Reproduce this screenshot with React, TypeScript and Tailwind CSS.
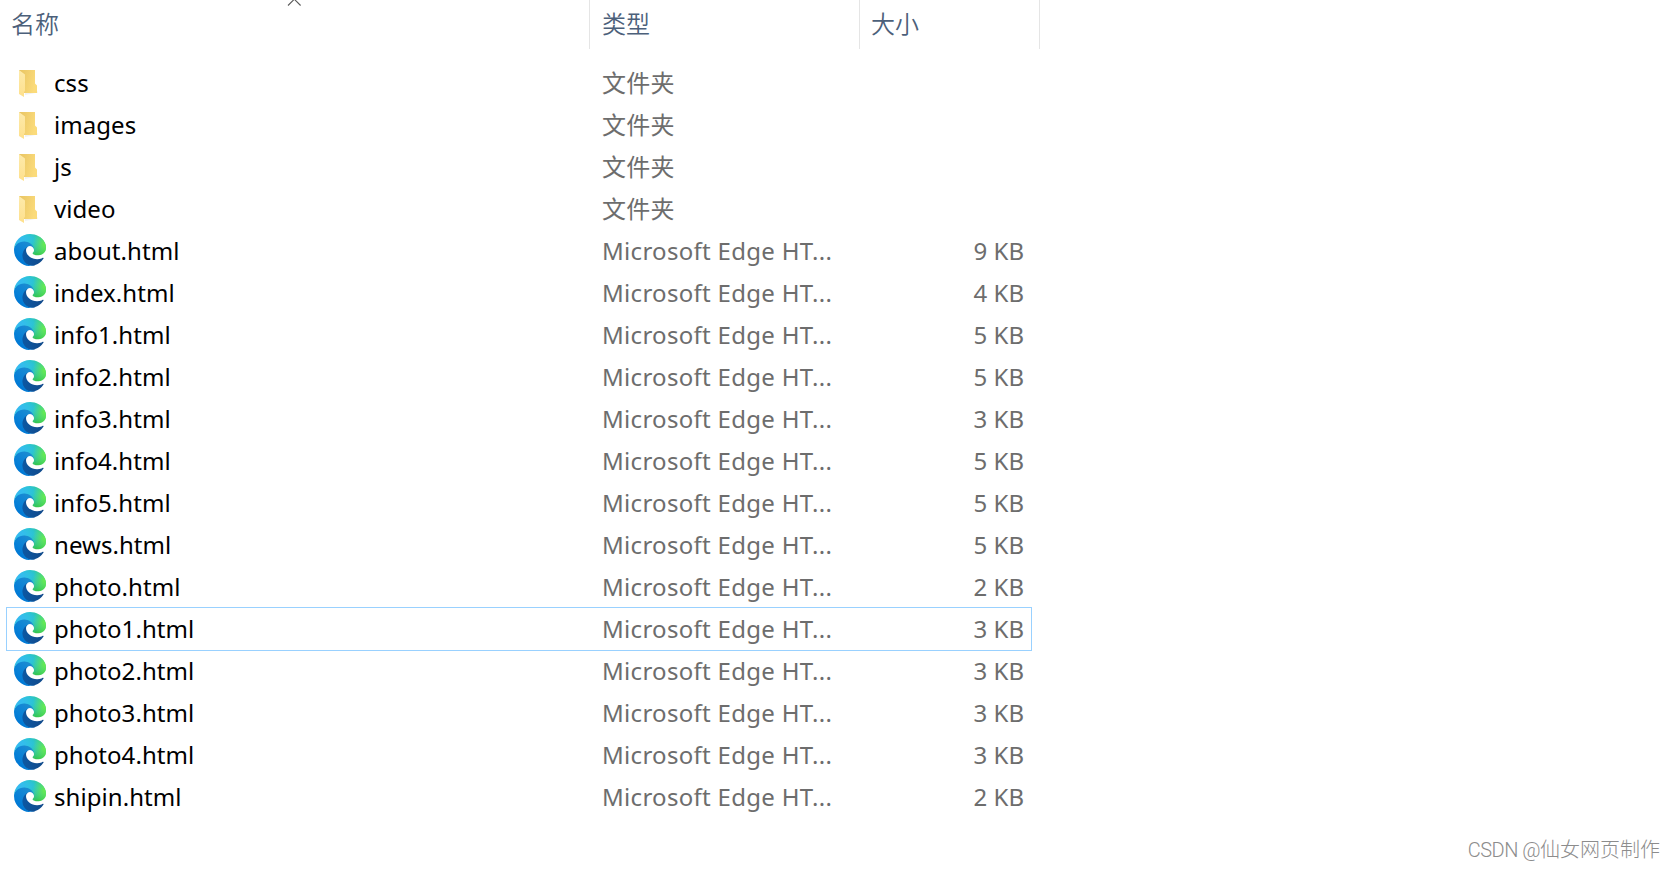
type FileEntry = {
    name: string;
    kind: "folder" | "html";
    size?: string;
    focused?: boolean;
};

const FILES: FileEntry[] = [
    { name: "css", kind: "folder" },
    { name: "images", kind: "folder" },
    { name: "js", kind: "folder" },
    { name: "video", kind: "folder" },
    { name: "about.html", kind: "html", size: "9 KB" },
    { name: "index.html", kind: "html", size: "4 KB" },
    { name: "info1.html", kind: "html", size: "5 KB" },
    { name: "info2.html", kind: "html", size: "5 KB" },
    { name: "info3.html", kind: "html", size: "3 KB" },
    { name: "info4.html", kind: "html", size: "5 KB" },
    { name: "info5.html", kind: "html", size: "5 KB" },
    { name: "news.html", kind: "html", size: "5 KB" },
    { name: "photo.html", kind: "html", size: "2 KB" },
    { name: "photo1.html", kind: "html", size: "3 KB", focused: true },
    { name: "photo2.html", kind: "html", size: "3 KB" },
    { name: "photo3.html", kind: "html", size: "3 KB" },
    { name: "photo4.html", kind: "html", size: "3 KB" },
    { name: "shipin.html", kind: "html", size: "2 KB" },
];

// Gradients shared by all the row icons
function IconDefs() {
    return (
        <svg className="absolute w-0 h-0" aria-hidden="true">
            <defs>
                <linearGradient id="folder-back" x1="0" y1="0" x2="1" y2="0.3">
                    <stop offset="0" stopColor="#e8c462" />
                    <stop offset="1" stopColor="#fbdb7b" />
                </linearGradient>
                <linearGradient id="folder-front" x1="0" y1="0" x2="0" y2="1">
                    <stop offset="0" stopColor="#fdeaab" />
                    <stop offset="1" stopColor="#fee08c" />
                </linearGradient>
                <linearGradient id="edge-dark" gradientUnits="userSpaceOnUse" x1="59" y1="178" x2="236" y2="178">
                    <stop offset="0" stopColor="#0c59a4" />
                    <stop offset="1" stopColor="#114a8b" />
                </linearGradient>
                <linearGradient id="edge-blue" gradientUnits="userSpaceOnUse" x1="138" y1="100" x2="40" y2="220">
                    <stop offset="0" stopColor="#1b8bd0" />
                    <stop offset="0.16" stopColor="#1588d4" />
                    <stop offset="0.67" stopColor="#0680d7" />
                    <stop offset="1" stopColor="#0078d4" />
                </linearGradient>
                <radialGradient
                    id="edge-wave"
                    gradientUnits="userSpaceOnUse"
                    cx="0"
                    cy="0"
                    r="202"
                    gradientTransform="matrix(-0.04 1 -2.13 -0.08 26 45)"
                >
                    <stop offset="0" stopColor="#35b8f1" />
                    <stop offset="0.11" stopColor="#34bded" />
                    <stop offset="0.23" stopColor="#2fc2df" />
                    <stop offset="0.31" stopColor="#2bc3d2" />
                    <stop offset="0.67" stopColor="#36c752" />
                </radialGradient>
                <radialGradient
                    id="edge-lime"
                    gradientUnits="userSpaceOnUse"
                    cx="0"
                    cy="0"
                    r="115"
                    gradientTransform="matrix(0.28 0.96 -0.78 0.23 245 85)"
                >
                    <stop offset="0" stopColor="#66eb4e" />
                    <stop offset="1" stopColor="#66eb6e" stopOpacity="0" />
                </radialGradient>
            </defs>
        </svg>
    );
}

function FolderIcon() {
    return (
        <svg viewBox="0 0 20 28" className="w-5 h-7 ml-[5px] mt-1">
            <path d="M6 23 19 21.500 19 22.500 6 25Z" fill="#f1f1f1" />
            <path d="M0 0H16V13.500L18 15.500V23H0Z" fill="url(#folder-back)" />
            <path d="M0 0 6 4.500V21L5 22V27L0 24Z" fill="url(#folder-front)" />
        </svg>
    );
}

const EDGE_WAVE =
    "M152.300 148.900c-.9 1-3.400 2.500-3.400 5.600 0 2.600 1.700 5.200 4.800 7.300 14.300 10 41.400 8.600 41.500 8.600a59.600 59.600 0 0 0 30.300-8.300 61.400 61.400 0 0 0 30.400-52.900c.3-22.400-8-37.300-11.300-43.900C223.500 23.900 177.700 0 128 0A128 128 0 0 0 0 126.200c.5-36.500 36.800-66 80-66 3.500 0 23.500.3 42 10a72.600 72.600 0 0 1 30.900 29.300c6.100 10.600 7.200 24.100 7.200 29.500s-2.700 13.300-7.800 19.900Z";

function EdgeIcon() {
    return (
        <svg viewBox="0 0 256 256" className="w-8 h-8">
            <path
                d="M231 190.500c-3.400 1.800-6.900 3.400-10.500 4.700a101.500 101.500 0 0 1-35.900 6.400c-47.300 0-88.500-32.500-88.500-74.300a31.500 31.500 0 0 1 16.400-27.300c-42.800 1.800-53.800 46.400-53.800 72.500 0 74 68.100 81.400 82.800 81.400 7.900 0 19.800-2.300 27-4.600l1.300-.4a128.300 128.300 0 0 0 66.600-52.800 4 4 0 0 0-5.400-5.600Z"
                fill="url(#edge-dark)"
            />
            <path
                d="M105.700 241.400a79.200 79.200 0 0 1-22.700-21.300 80.700 80.700 0 0 1 29.500-120c3.200-1.500 8.500-4.100 15.600-4a32.400 32.400 0 0 1 25.700 13 31.900 31.900 0 0 1 6.300 18.700c0-.2 24.500-79.600-80-79.600-43.900 0-80 41.600-80 78.200a130.200 130.200 0 0 0 12.100 56 128 128 0 0 0 156.400 67 75.500 75.500 0 0 1-62.800-8Z"
                fill="url(#edge-blue)"
            />
            <path d={EDGE_WAVE} fill="url(#edge-wave)" />
            <path d={EDGE_WAVE} fill="url(#edge-lime)" />
        </svg>
    );
}

function HeaderRow() {
    return (
        <div className="relative flex h-[49px] text-[#4c607a] font-[350]">
            <div className="w-[590px] pl-[11px] pt-[6px] border-r border-[#e5e5e5]">名称</div>
            <div className="w-[270px] pl-3 pt-[6px] border-r border-[#e5e5e5]">类型</div>
            <div className="w-[180px] pl-[11px] pt-[6px] border-r border-[#e5e5e5]">大小</div>
            {/* Sort indicator */}
            <svg viewBox="0 0 14 6" className="absolute left-[287px] top-0 w-[14px] h-1.5">
                <path d="M1 5.500 7.300 -0.800 13.600 5.500" fill="none" stroke="#5a5a5a" strokeWidth="1.100" />
            </svg>
        </div>
    );
}

function FileRow({ file }: { file: FileEntry }) {
    return (
        <div
            className={`flex h-[42px] w-[1024px] ${file.focused ? "outline outline-1 outline-[#99d1ff] -outline-offset-0" : ""}`}
        >
            <div className="w-10 pl-[7px] pt-1 shrink-0">
                {file.kind === "folder" ? <FolderIcon /> : <EdgeIcon />}
            </div>
            <div className="w-[548px] pl-[7px] pt-[3px] text-black tracking-[0.06px]">{file.name}</div>
            <div className="w-[258px] pl-[7px] pt-[3px] text-[#6d6d6d] tracking-[0.3px]">
                {file.kind === "folder" ? "文件夹" : "Microsoft Edge HT..."}
            </div>
            <div className="flex-1 pr-[7px] pt-[3px] text-right text-[#6d6d6d]">{file.size}</div>
        </div>
    );
}

export default function App() {
    return (
        <div className="relative w-[1675px] h-[869px] overflow-hidden bg-white font-['Noto_Sans','Noto_Sans_CJK_SC',sans-serif] text-[24px] leading-9 whitespace-nowrap">
            <IconDefs />
            <HeaderRow />
            <div className="flex flex-col pt-[13px] pl-[7px]">
                {FILES.map((file) => (
                    <FileRow key={file.name} file={file} />
                ))}
            </div>
            <div className="absolute right-[15px] bottom-[3px] font-['Roboto','Noto_Sans_CJK_SC',sans-serif] font-light text-[20px] leading-8 text-[#8c8c8c]">
                <span className="tracking-[-0.5px]">CSDN @</span>仙女网页制作
            </div>
        </div>
    );
}
